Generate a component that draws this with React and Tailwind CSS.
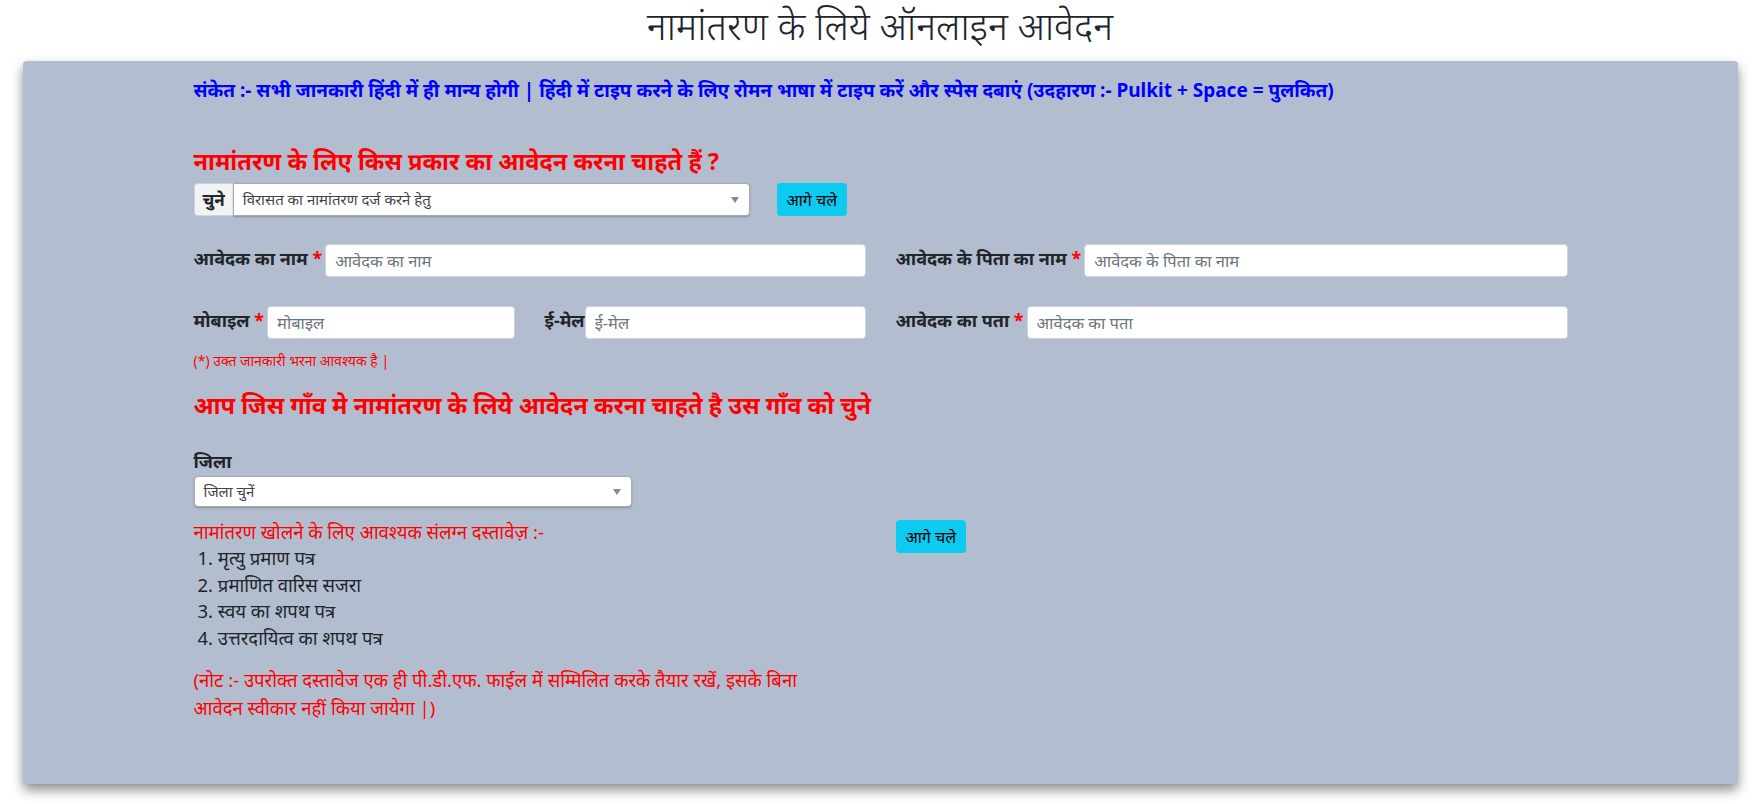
import React, { useState } from 'react'

const Label = ({ text, required }) => (
    <label className="shrink-0 whitespace-nowrap text-[18px] font-bold text-[#212529] leading-[24px] pr-[3px] pb-[6px]">
        {text}
        {required && <span className="text-[#ff0000]"> *</span>}
    </label>
)

const Input = ({ placeholder, value, onChange }) => (
    <input
        value={value}
        onChange={(e) => onChange(e.target.value)}
        type="text"
        placeholder={placeholder}
        className="h-[33px] w-full min-w-0 rounded-[4px] border border-[#ced4da] bg-white px-[9px] text-[16.5px] text-[#212529] placeholder-[#6c757d] focus:outline-none"
    />
)

const FakeSelect = ({ text, className }) => (
    <div className={"flex items-center justify-between rounded-[4px] border border-[#aaa] bg-white pl-[9px] pr-[10px] shadow-[0_1px_2px_rgba(0,0,0,0.25)] " + className}>
        <span className="text-[15px] text-[#444]">{text}</span>
        <span className="h-0 w-0 border-x-[4px] border-t-[6px] border-x-transparent border-t-[#888]"></span>
    </div>
)

const App = () => {

    const [form, setForm] = useState({
        naam: "",
        pita: "",
        mobile: "",
        email: "",
        pata: "",
    })

    const setField = (key) => (val) => { setForm({ ...form, [key]: val }) }

    return (
        <div className="min-h-screen bg-white font-['Noto_Sans','Liberation_Sans',sans-serif] text-[#212529]">
            <h1 className="h-[50px] pt-[1px] text-center text-[38px] font-light leading-[48px] text-[#212529]">
                नामांतरण के लिये ऑनलाइन आवेदन
            </h1>

            <div className="mt-[11px] ml-[23px] mr-[22px] rounded-[4px] bg-[#b2becf] pt-[15px] pb-[62px] shadow-[0_6px_12px_rgba(0,0,0,0.45)]">
                <div className="mx-auto w-[1374px]">
                    <p className="text-[19px] font-bold leading-[28px] text-[#0000ff]">
                        संकेत :- सभी जानकारी हिंदी में ही मान्य होगी | हिंदी में टाइप करने के लिए रोमन भाषा में टाइप करें और स्पेस दबाएं (उदहारण :- Pulkit + Space = पुलकित)
                    </p>

                    <h3 className="mt-[41px] text-[23.6px] font-bold leading-[32px] text-[#ff0000]">
                        नामांतरण के लिए किस प्रकार का आवेदन करना चाहते हैं ?
                    </h3>

                    <div className="mt-[6px] flex items-center">
                        <div className="flex h-[33px] w-[556px]">
                            <span className="flex items-center rounded-l-[4px] border border-r-0 border-[#ced4da] bg-[#f2f3f5] px-[8px] text-[17px] font-bold text-[#212529]">
                                चुने
                            </span>
                            <FakeSelect text="विरासत का नामांतरण दर्ज करने हेतु" className="h-full flex-1 rounded-l-none" />
                        </div>
                        <button className="ml-[27px] h-[33px] rounded-[4px] bg-[#0dcaf0] px-[10px] text-[16px] text-black focus:outline-none">
                            आगे चले
                        </button>
                    </div>

                    <div className="mt-[28px] grid grid-cols-2 gap-x-[30px] gap-y-[29px]">
                        <div className="flex items-center">
                            <Label text="आवेदक का नाम" required />
                            <Input placeholder="आवेदक का नाम" value={form.naam} onChange={setField("naam")} />
                        </div>
                        <div className="flex items-center">
                            <Label text="आवेदक के पिता का नाम" required />
                            <Input placeholder="आवेदक के पिता का नाम" value={form.pita} onChange={setField("pita")} />
                        </div>

                        <div className="grid grid-cols-2 gap-x-[30px]">
                            <div className="flex items-center">
                                <Label text="मोबाइल" required />
                                <Input placeholder="मोबाइल" value={form.mobile} onChange={setField("mobile")} />
                            </div>
                            <div className="flex items-center">
                                <label className="shrink-0 whitespace-nowrap pb-[6px] text-[18px] font-bold leading-[24px] text-[#212529]">ई-मेल</label>
                                <Input placeholder="ई-मेल" value={form.email} onChange={setField("email")} />
                            </div>
                        </div>
                        <div className="flex items-center">
                            <Label text="आवेदक का पता" required />
                            <Input placeholder="आवेदक का पता" value={form.pata} onChange={setField("pata")} />
                        </div>
                    </div>

                    <p className="mt-[13px] text-[14px] leading-[18px] text-[#ff0000]">(*) उक्त जानकारी भरना आवश्यक है |</p>

                    <h3 className="mt-[19px] text-[23.6px] font-bold leading-[32px] text-[#ff0000]">
                        आप जिस गाँव मे नामांतरण के लिये आवेदन करना चाहते है उस गाँव को चुने
                    </h3>

                    <p className="mt-[27px] text-[18px] font-bold leading-[26px] text-[#212529]">जिला</p>
                    <FakeSelect text="जिला चुनें" className="mt-[2px] h-[31px] w-[438px]" />

                    <div className="grid grid-cols-2 gap-x-[30px]">
                        <div>
                            <p className="mt-[12px] text-[18.5px] leading-[26px] text-[#ff0000]">
                                नामांतरण खोलने के लिए आवश्यक संलग्न दस्तावेज़ :-
                            </p>
                            <ol className="pl-[4px] text-[18.5px] leading-[26.6px] text-[#212529]">
                                <li>1. मृत्यु प्रमाण पत्र</li>
                                <li>2. प्रमाणित वारिस सजरा</li>
                                <li>3. स्वय का शपथ पत्र</li>
                                <li>4. उत्तरदायित्व का शपथ पत्र</li>
                            </ol>
                            <p className="mt-[15px] w-[650px] text-[18.5px] leading-[28px] text-[#ff0000]">
                                (नोट :- उपरोक्त दस्तावेज एक ही पी.डी.एफ. फाईल में सम्मिलित करके तैयार रखें, इसके बिना आवेदन स्वीकार नहीं किया जायेगा |)
                            </p>
                        </div>
                        <div className="pt-[13px]">
                            <button className="h-[33px] rounded-[4px] bg-[#0dcaf0] px-[10px] text-[16px] text-black focus:outline-none">
                                आगे चले
                            </button>
                        </div>
                    </div>
                </div>
            </div>
        </div>
    )
}

export default App
